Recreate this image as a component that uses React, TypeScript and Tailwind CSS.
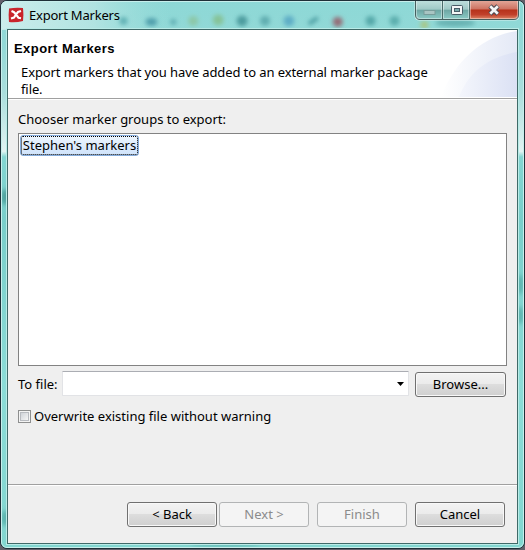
import type { ReactNode } from "react";

function PushButton({ children, disabled = false, className = "" }: { children: ReactNode; disabled?: boolean; className?: string }) {
  const look = disabled
    ? "border-[#b2b4b5] bg-[#f4f4f4] text-[#8b8b8b]"
    : "border-[#707070] bg-[linear-gradient(#f3f3f3_0%,#ebebeb_48%,#dddddd_50%,#cfcfcf_100%)] text-black shadow-[inset_0_0_0_1px_#f8f8f8]";
  return (
    <button disabled={disabled} className={`flex h-[25px] w-[90px] shrink-0 items-center justify-center whitespace-pre rounded-[3px] border pb-px text-[13px] leading-none ${look} ${className}`}>
      {children}
    </button>
  );
}

/* Blurred colours of the toolbar behind the glass title bar. */
function GlassBackdrop() {
  return (
    <svg className="absolute inset-0 h-full w-full" viewBox="0 0 525 550" preserveAspectRatio="none">
      <defs>
        <linearGradient id="side" x1="0" y1="0" x2="0" y2="1">
          <stop offset="0" stopColor="#8dd8d6" />
          <stop offset="0.08" stopColor="#93d9d7" />
          <stop offset="0.17" stopColor="#abdedd" />
          <stop offset="0.275" stopColor="#e1f3f2" />
          <stop offset="0.285" stopColor="#84d6d2" />
          <stop offset="0.4" stopColor="#79ceca" />
          <stop offset="0.7" stopColor="#8bdcd7" />
          <stop offset="1" stopColor="#82d6d0" />
        </linearGradient>
        <linearGradient id="glow" x1="0" y1="0" x2="1" y2="0">
          <stop offset="0" stopColor="#e0f5f3" stopOpacity="0.75" />
          <stop offset="0.55" stopColor="#c3e9e7" stopOpacity="0.65" />
          <stop offset="1" stopColor="#a0dfdc" stopOpacity="0" />
        </linearGradient>
        <filter id="soft" x="-50%" y="-50%" width="200%" height="200%">
          <feGaussianBlur stdDeviation="2.2" />
        </filter>
      </defs>
      <rect width="525" height="550" fill="url(#side)" />
      <rect width="170" height="29" fill="url(#glow)" />
      <g filter="url(#soft)">
        <circle cx="123" cy="20" r="4" fill="#5fb0b3" />
        <ellipse cx="151" cy="21" rx="6" ry="4" fill="#509fac" />
        <circle cx="173" cy="21" r="3" fill="#5cabb0" />
        <circle cx="193" cy="20" r="5" fill="#8cc8a8" />
        <circle cx="218" cy="19" r="5.5" fill="#86c398" />
        <circle cx="242" cy="20" r="5.5" fill="#4d9c9f" />
        <circle cx="265" cy="20" r="5" fill="#60adb0" />
        <circle cx="289" cy="20" r="5.5" fill="#5faec6" />
        <path d="M309 23 318 17" stroke="#4b9da2" strokeWidth="4" />
        <circle cx="338" cy="21" r="5" fill="#946d77" />
        <circle cx="371" cy="20" r="5" fill="#55a8a9" />
        <circle cx="395" cy="20" r="5" fill="#5baead" />
        <circle cx="425" cy="24" r="4" fill="#a8c684" />
        <ellipse cx="456" cy="22" rx="20" ry="4" fill="#67b2b2" />
        <ellipse cx="4" cy="197" rx="4" ry="8" fill="#4fa29e" />
        <ellipse cx="4" cy="520" rx="4" ry="8" fill="#5cb4ae" />
        <ellipse cx="521" cy="285" rx="4" ry="10" fill="#5fb5b0" />
        <ellipse cx="521" cy="316" rx="4" ry="9" fill="#5fb5b0" />
        <ellipse cx="225" cy="546" rx="35" ry="3" fill="#67bdb8" />
      </g>
    </svg>
  );
}

function AppIcon() {
  return (
    <svg className="h-4 w-4" viewBox="0 0 16 16">
      <path d="M1 1.5Q8 .2 15 1 15.8 8 15 14 8 15.8 1 15 .2 8 1 1.5Z" fill="#c9252b" />
      <path d="M3.5 4 6 5.2 8 7.5 10 5 13 4M3 11.5 6 10.5 8 7.5 10.5 10.7 13 11.2" fill="none" stroke="#fff" strokeWidth="2.1" />
    </svg>
  );
}

function CaptionButtons() {
  return (
    <svg className="absolute left-[414px] top-0 h-[21px] w-[106px]" viewBox="0 0 106 21">
      <defs>
        <linearGradient id="cap" x1="0" y1="0" x2="0" y2="1">
          <stop offset="0" stopColor="#bddedc" /><stop offset=".46" stopColor="#9fc9c6" />
          <stop offset=".5" stopColor="#6da6a3" /><stop offset="1" stopColor="#8bcac5" />
        </linearGradient>
        <linearGradient id="close" x1="0" y1="0" x2="0" y2="1">
          <stop offset="0" stopColor="#e1a597" /><stop offset=".44" stopColor="#ce7362" />
          <stop offset=".5" stopColor="#b6321b" /><stop offset=".75" stopColor="#c1402a" /><stop offset="1" stopColor="#dc8465" />
        </linearGradient>
      </defs>
      <path d="M1.5 1V15.5Q1.5 19.5 5.5 19.5H100.5Q104.5 19.5 104.5 15.5V1" fill="#d3eeec" stroke="#d6efed" strokeWidth="2" />
      <path d="M2 1H29V19H6Q2 19 2 15Z" fill="url(#cap)" />
      <path d="M29 1H56V19H29Z" fill="url(#cap)" />
      <path d="M56 1H104V15Q104 19 100 19H56Z" fill="url(#close)" />
      <path d="M1.5 1V15Q1.5 19.5 6 19.5H100Q104.5 19.5 104.5 15V1" fill="none" stroke="#45605f" />
      <path d="M28.5 1V19M55.5 1V19" stroke="#4a6d6b" />
      <path d="M2.5 1V15Q2.5 18.5 6 18.5H27.5V1M29.5 1V18.5H54.5V1M56.5 1V18.5H100Q103.5 18.5 103.5 15V1" fill="none" stroke="#fff" strokeOpacity=".4" />
      <rect x="10" y="10.5" width="11" height="4" fill="#a9c5c3" stroke="#789c9a" />
      <rect x="37.5" y="5.5" width="11" height="9" rx="1" fill="#f3f6f6" stroke="#485c67" />
      <rect x="40.5" y="8.5" width="5" height="3" fill="#7bacad" stroke="#485c67" />
      <path d="m76 6 8 8M84 6l-8 8" stroke="#4b4950" strokeWidth="4.6" />
      <path d="m76.2 6.2 7.6 7.6M83.8 6.2l-7.6 7.6" stroke="#f4f5f5" strokeWidth="2.7" />
    </svg>
  );
}

function HeaderSwoosh() {
  return (
    <svg className="absolute right-0 top-0 h-[67px] w-[80px]" viewBox="0 0 80 67">
      <defs>
        <linearGradient id="outer" x1="0" x2="1" y1="0" y2="0">
          <stop offset="0" stopColor="#fff" /><stop offset="1" stopColor="#e4e9f6" />
        </linearGradient>
        <linearGradient id="inner" x1="0" x2="1" y1="0" y2="0">
          <stop offset="0" stopColor="#f4f6fc" /><stop offset="1" stopColor="#dbe1f4" />
        </linearGradient>
      </defs>
      <path d="M4 67C18 31 45 6 80 1V67Z" fill="url(#outer)" />
      <path d="M22 67C31 43 50 27 80 22V67Z" fill="url(#inner)" />
    </svg>
  );
}

export default function App() {
  return (
    <div className="h-[550px] w-[525px] overflow-hidden bg-[#625f6a] font-['Noto_Sans','Open_Sans',sans-serif] text-[13px] leading-none text-black">
      <div className="relative flex h-[549px] w-[525px] flex-col overflow-hidden rounded-[7px] border border-[#1e3038] shadow-[inset_0_0_0_1px_#c7efec]">
        <GlassBackdrop />
        <div className="pointer-events-none absolute inset-0 rounded-[6px] border border-[#c7efec]" />
        <header className="relative flex h-7 shrink-0 items-center gap-1 pl-[7px]">
          <AppIcon />
          <span className="ml-px whitespace-nowrap text-[13px] tracking-[-0.22px]">Export Markers</span>
        </header>
        <div className="absolute -left-px -top-px"><CaptionButtons /></div>
        <main className="relative ml-[6px] flex h-[515px] w-[511px] flex-col border border-[#3f6a68] bg-[#efefef] shadow-[0_0_0_1px_#b9ebe7]">
          <section className="relative h-[68px] shrink-0 bg-white pl-1.5 pt-[11px]">
            <HeaderSwoosh />
            <h1 className="relative whitespace-nowrap font-['Liberation_Sans',Arial,sans-serif] text-[13px] font-bold leading-[15px] tracking-[0.45px]">Export Markers</h1>
            <p className="relative ml-[7px] mt-[8px] whitespace-nowrap leading-[17px] tracking-[-0.1px]">
              Export markers that you have added to an external marker package<br />file.
            </p>
          </section>
          <div className="h-[2px] shrink-0 border-t border-[#a0a0a0] bg-white" />
          <section className="flex flex-col pl-[10px] pr-[10px]">
            <label className="mt-[11px] h-[22px] whitespace-nowrap leading-[17px]">Chooser marker groups to export:</label>
            <div className="h-[233px] w-[489px] border border-[#828282] bg-white p-px">
              <div className="flex h-[21px] w-[119px] items-center justify-center rounded-[3px] border border-[#84acdd] bg-linear-to-b from-[#edf5fd] to-[#cfe3fb]">
                <div className="flex h-[19px] w-[117px] shrink-0 items-center justify-center rounded-[2px] border border-dotted border-black whitespace-nowrap">Stephen's markers</div>
              </div>
            </div>
            <div className="mt-[5px] flex h-[26px] w-[489px]">
              <label className="w-[44px] whitespace-nowrap pt-[5px] leading-[17px]">To file:</label>
              <div className="flex h-[25px] w-[347px] items-center justify-end rounded-[1px] border border-[#e2e3e6] border-t-[#abadb3] bg-white pr-[4px]">
                <svg className="h-1 w-[7px]" viewBox="0 0 7 4"><path d="M0 0H7L3.5 4Z" /></svg>
              </div>
              <PushButton className="ml-[6px] mt-px w-[91px]">Browse...</PushButton>
            </div>
            <label className="mt-[12px] flex h-[14px] items-center gap-[3px] whitespace-nowrap">
              <span className="flex h-[13px] w-[13px] items-center justify-center border border-[#8e8f8f] bg-[#f4f4f4]">
                <span className="h-[9px] w-[9px] border border-[#b8bbc0] bg-linear-to-br from-[#cfd3d8] to-[#f6f6f6]" />
              </span>
              <span>Overwrite existing file without warning</span>
            </label>
          </section>
          <footer className="mt-auto h-[59px] shrink-0 border-t border-[#a0a0a0]">
            <div className="flex border-t border-white pl-[119px] pt-[16px]">
              <PushButton>{"< Back"}</PushButton>
              <PushButton disabled className="ml-[2px]">{"Next >"}</PushButton>
              <PushButton disabled className="ml-[8px]">Finish</PushButton>
              <PushButton className="ml-[8px]">Cancel</PushButton>
            </div>
          </footer>
        </main>
      </div>
    </div>
  );
}
